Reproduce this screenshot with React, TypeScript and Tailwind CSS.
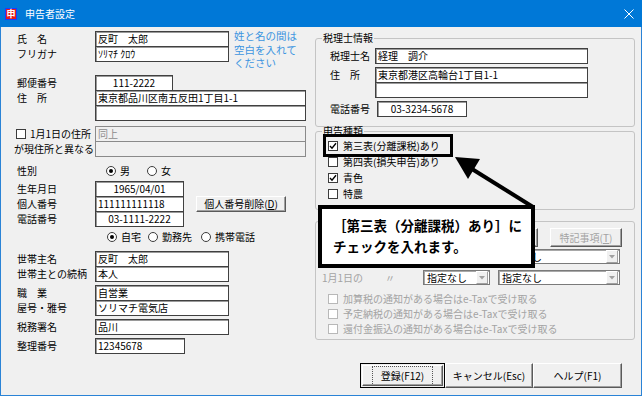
import React from "react";

function Field({
  className = "",
  children,
  center = false,
  disabled = false,
}: {
  className?: string;
  children?: React.ReactNode;
  center?: boolean;
  disabled?: boolean;
}) {
  return (
    <div
      className={`h-[16px] shrink-0 border flex items-center px-[2px] text-[10px] leading-[12px] whitespace-nowrap overflow-hidden ${
        disabled
          ? "bg-[#f0f0f0] border-[#8a8a8a] text-[#8c8c8c]"
          : "bg-white border-[#404040] shadow-[inset_1px_1px_0_#9a9a9a] text-black"
      } ${center ? "justify-center" : ""} ${className}`}
    >
      {children}
    </div>
  );
}

function Radio({ checked = false }: { checked?: boolean }) {
  return (
    <span className="w-[10px] h-[10px] rounded-full border border-[#3c3c3c] bg-white flex items-center justify-center shrink-0">
      {checked && <span className="w-[4px] h-[4px] rounded-full bg-black" />}
    </span>
  );
}

function Check({ checked = false, disabled = false }: { checked?: boolean; disabled?: boolean }) {
  return (
    <span
      className={`w-[10px] h-[10px] border flex items-center justify-center shrink-0 ${
        disabled ? "border-[#b8b8b8] bg-white" : "border-[#3c3c3c] bg-white"
      }`}
    >
      {checked && (
        <svg width="8" height="8" viewBox="0 0 8 8">
          <path d="M1 4 L3 6.2 L7 1.3" stroke="#000" strokeWidth="1.4" fill="none" />
        </svg>
      )}
    </span>
  );
}

const btn3d =
  "flex items-center justify-center bg-[#f0f0f0] border border-t-white border-l-white border-r-[#5a5a5a] border-b-[#5a5a5a] shadow-[inset_-1px_-1px_0_#a0a0a0] text-[10px] leading-[12px] whitespace-nowrap";

function Dropdown({ className = "", text }: { className?: string; text: string }) {
  return (
    <div
      className={`h-[15px] bg-white border border-[#7a7a7a] shadow-[inset_1px_1px_0_#a8a8a8] flex items-center text-[10px] ${className}`}
    >
      <span className="flex-1 min-w-0 pl-[3px] whitespace-nowrap leading-[13px]">{text}</span>
      <span className="w-[12px] h-[13px] mr-px shrink-0 bg-[#f0f0f0] border border-t-white border-l-white border-r-[#a0a0a0] border-b-[#a0a0a0] flex items-center justify-center">
        <svg width="6" height="4" viewBox="0 0 6 4">
          <path d="M0 0 L6 0 L3 3.5 Z" fill="#a0a0a0" />
        </svg>
      </span>
    </div>
  );
}

export default function App() {
  return (
    <div className="relative w-[642px] h-[396px] overflow-hidden bg-white font-['Noto_Sans_CJK_JP',sans-serif] text-black">
      {/* Title bar */}
      <div className="h-[27px] bg-[#0078d7] flex items-center pl-[5px] pr-[8px]">
        <div className="w-[12px] h-[12px] border border-[#1a3cff] bg-[#e41b1b] flex items-center justify-center text-white text-[9px] font-bold leading-none">
          申
        </div>
        <div className="ml-[8px] text-white text-[10px] leading-[12px]">申告者設定</div>
        <div className="flex-1" />
        <svg width="10" height="10" viewBox="0 0 10 10">
          <path d="M0.5 0.5 L9.5 9.5 M9.5 0.5 L0.5 9.5" stroke="#fff" strokeWidth="1" />
        </svg>
      </div>

      {/* Body */}
      <div className="h-[369px] bg-[#f0f0f0] border-x border-b border-[#2a83d6] flex text-[10px] leading-[12px]">
        {/* Left column */}
        <div className="w-[314px] shrink-0 pl-[16px] pt-[4px]">
          <div className="flex">
            <div>
              <div className="flex items-center">
                <div className="w-[78px]">氏　名</div>
                <Field className="w-[134px]">反町　太郎</Field>
              </div>
              <div className="flex items-center -mt-px">
                <div className="w-[78px]">フリガナ</div>
                <Field className="w-[134px]">ｿﾘﾏﾁ ｸﾛｳ</Field>
              </div>
            </div>
            <div className="ml-[5px] -mt-[2px] text-[10.5px] leading-[13.5px] text-[#3d95e0]">
              姓と名の間は
              <br />
              空白を入れて
              <br />
              ください
            </div>
          </div>

          <div className="flex items-center mt-[5px]">
            <div className="w-[78px]">郵便番号</div>
            <Field className="w-[78px]" center>
              111-2222
            </Field>
          </div>
          <div className="flex items-center -mt-px">
            <div className="w-[78px]">住　所</div>
            <Field className="w-[211px]">東京都品川区南五反田1丁目1-1</Field>
          </div>
          <div className="flex items-center -mt-px">
            <div className="w-[78px]" />
            <Field className="w-[211px]" />
          </div>

          <div className="flex items-center mt-[5px]">
            <div className="w-[79px] -ml-px flex items-center gap-[4px] whitespace-nowrap">
              <Check />
              <span>1月1日の住所</span>
            </div>
            <Field className="w-[211px]" disabled>
              同上
            </Field>
          </div>
          <div className="flex items-center -mt-px">
            <div className="w-[81px] -ml-[3px] whitespace-nowrap">が現住所と異なる</div>
            <Field className="w-[211px]" disabled />
          </div>

          <div className="flex items-center mt-[6px] h-[16px]">
            <div className="w-[89px]">性別</div>
            <Radio checked />
            <span className="ml-[4px]">男</span>
            <span className="ml-[17px]">
              <Radio />
            </span>
            <span className="ml-[4px]">女</span>
          </div>

          <div className="flex items-center mt-[2px]">
            <div className="w-[78px]">生年月日</div>
            <Field className="w-[89px]" center>
              1965/04/01
            </Field>
          </div>
          <div className="flex items-center -mt-px">
            <div className="w-[78px]">個人番号</div>
            <Field className="w-[89px]">111111111118</Field>
            <div className={`${btn3d} ml-[12px] w-[90px] h-[16px]`}>
              個人番号削除(<span className="underline">D</span>)
            </div>
          </div>
          <div className="flex items-center -mt-px">
            <div className="w-[78px]">電話番号</div>
            <Field className="w-[89px]" center>
              03-1111-2222
            </Field>
          </div>

          <div className="flex items-center mt-[2px] h-[16px]">
            <div className="w-[90px]" />
            <Radio checked />
            <span className="ml-[4px]">自宅</span>
            <span className="ml-[7px]">
              <Radio />
            </span>
            <span className="ml-[4px]">勤務先</span>
            <span className="ml-[9px]">
              <Radio />
            </span>
            <span className="ml-[4px]">携帯電話</span>
          </div>

          <div className="flex items-center mt-[6px]">
            <div className="w-[78px]">世帯主名</div>
            <Field className="w-[134px]">反町　太郎</Field>
          </div>
          <div className="flex items-center -mt-px">
            <div className="w-[78px] whitespace-nowrap">世帯主との続柄</div>
            <Field className="w-[134px]">本人</Field>
          </div>

          <div className="flex items-center mt-[3px]">
            <div className="w-[78px]">職　業</div>
            <Field className="w-[134px]">自営業</Field>
          </div>
          <div className="flex items-center -mt-px">
            <div className="w-[78px]">屋号・雅号</div>
            <Field className="w-[134px]">ソリマチ電気店</Field>
          </div>

          <div className="flex items-center mt-[3px]">
            <div className="w-[78px]">税務署名</div>
            <Field className="w-[134px]">品川</Field>
          </div>

          <div className="flex items-center mt-[3px]">
            <div className="w-[78px]">整理番号</div>
            <Field className="w-[90px]">12345678</Field>
          </div>
        </div>

        {/* Right column */}
        <div className="w-[320px] shrink-0">
          <fieldset className="mt-[5px] border border-[#c4c4c4] rounded-[3px] px-0">
            <legend className="ml-[6px] px-[1px] leading-[12px] text-[10px]">税理士情報</legend>
            <div className="pl-[14px] pt-[4px] pb-[9px]">
              <div className="flex items-center">
                <div className="w-[45px]">税理士名</div>
                <Field className="w-[213px]">経理　調介</Field>
              </div>
              <div className="flex items-center mt-[3px]">
                <div className="w-[45px]">住　所</div>
                <Field className="w-[213px]">東京都港区高輪台1丁目1-1</Field>
              </div>
              <div className="flex items-center -mt-px">
                <div className="w-[45px]" />
                <Field className="w-[213px]" />
              </div>
              <div className="flex items-center mt-[3px]">
                <div className="w-[47px]">電話番号</div>
                <Field className="w-[90px] h-[15px]" center>
                  03-3234-5678
                </Field>
              </div>
            </div>
          </fieldset>

          <fieldset className="-mt-[2px] border border-[#c4c4c4] rounded-[3px] px-0">
            <legend className="ml-[6px] px-[1px] leading-[12px] text-[10px]">申告種類</legend>
            <div className="pl-[12px] pt-[1px] pb-[7px]">
              <div className="flex items-center h-[16px] gap-[5px]">
                <Check checked />
                <span>第三表(分離課税)あり</span>
              </div>
              <div className="flex items-center h-[16px] gap-[5px]">
                <Check />
                <span>第四表(損失申告)あり</span>
              </div>
              <div className="flex items-center h-[16px] gap-[5px]">
                <Check checked />
                <span>青色</span>
              </div>
              <div className="flex items-center h-[16px] gap-[5px]">
                <Check />
                <span>特農</span>
              </div>
            </div>
          </fieldset>

          <div className="mt-[11px] border border-[#c4c4c4] rounded-[3px] pt-[6px] pb-[3px]">
            <div className="flex justify-end gap-[12px] pr-[12px]">
              <div className={`${btn3d} w-[70px] h-[19px] text-[#a3a3a3]`} />
              <div className={`${btn3d} w-[72px] h-[19px] text-[#a3a3a3]`}>
                特記事項(<span className="underline">T</span>)
              </div>
            </div>
            <div className="flex items-center mt-[2px]">
              <div className="w-[107px] pl-[6px]" />
              <div className="w-[67px] h-[15px] border border-[#7a7a7a] bg-white" />
              <Dropdown className="w-[122px] ml-[8px]" text="指定なし" />
            </div>
            <div className="flex items-center mt-[6px] text-[#a3a3a3]">
              <div className="w-[107px] pl-[6px] flex">
                <span className="w-[63px]">1月1日の</span>
                <span>〃</span>
              </div>
              <Dropdown className="w-[67px] text-black" text="指定なし" />
              <Dropdown className="w-[122px] ml-[8px] text-black" text="指定なし" />
            </div>
            <div className="mt-[6px] pl-[12px] text-[#a3a3a3]">
              <div className="flex items-center h-[15px] gap-[5px]">
                <Check disabled />
                <span>加算税の通知がある場合はe-Taxで受け取る</span>
              </div>
              <div className="flex items-center h-[15px] gap-[5px]">
                <Check disabled />
                <span>予定納税の通知がある場合はe-Taxで受け取る</span>
              </div>
              <div className="flex items-center h-[15px] gap-[5px]">
                <Check disabled />
                <span>還付金振込の通知がある場合はe-Taxで受け取る</span>
              </div>
            </div>
          </div>

          <div className="flex justify-end pr-[13px] mt-[23px]">
            <div className="w-[85px] h-[25px] border border-black p-px">
              <div className={`${btn3d} w-full h-full`}>
                <div className="px-[8px] py-[3px] border border-dotted border-[#555]">登録(F12)</div>
              </div>
            </div>
            <div className={`${btn3d} w-[88px] h-[25px]`}>キャンセル(Esc)</div>
            <div className={`${btn3d} w-[89px] h-[25px]`}>ヘルプ(F1)</div>
          </div>
        </div>
      </div>

      {/* Highlight box */}
      <div className="absolute left-[323px] top-[134px] w-[130px] h-[23px] border-[3px] border-black" />

      {/* Arrow */}
      <svg className="absolute left-0 top-0 pointer-events-none" width="642" height="396" viewBox="0 0 642 396">
        <line x1="533" y1="207" x2="472" y2="169" stroke="#000" strokeWidth="4" />
        <polygon points="455,157 480,159 468,179" fill="#000" />
      </svg>

      {/* Callout */}
      <div className="absolute left-[318px] top-[205px] w-[217px] h-[63px] border-[4px] border-black bg-white pl-[11px] pt-[6px] text-[13.5px] font-bold leading-[21px] whitespace-nowrap">
        <div>［第三表（分離課税）あり］に</div>
        <div>チェックを入れます。</div>
      </div>
    </div>
  );
}
